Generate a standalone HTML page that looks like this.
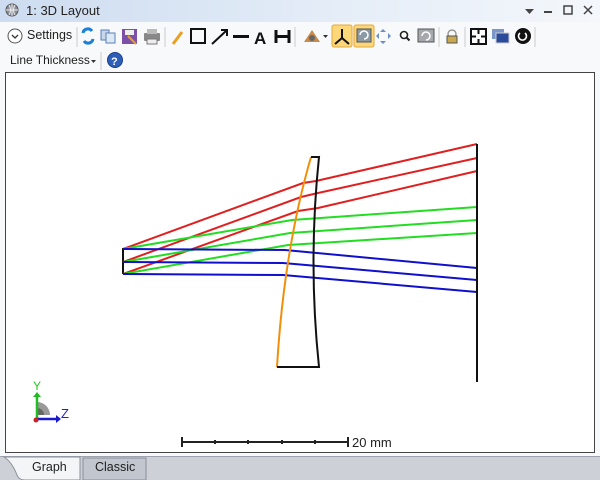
<!DOCTYPE html>
<html><head><style>
body{margin:0;width:600px;height:480px;overflow:hidden;background:#f8f9fa;font-family:"Liberation Sans",sans-serif;position:relative}
.t{position:absolute;font-size:12.5px;color:#1e1e1e;white-space:nowrap}
</style></head><body>
<div style="position:absolute;left:0;top:0;width:600px;height:22px;background:linear-gradient(90deg,#cddcf0,#e6eef8 60%,#f4f7fb)"></div>
<svg style="position:absolute;left:0;top:0" width="600" height="480">
<circle cx="12" cy="10" r="6" fill="#8a8f99" stroke="#555" stroke-width="1"/>
<path d="M12 4V16M6 10H18M9 5Q12 10 9 15M15 5Q12 10 15 15" stroke="#eee" stroke-width="1" fill="none"/>
<path d="M525 9h9l-4.5 5z" fill="#444"/>
<rect x="544" y="11" width="8" height="2" fill="#444"/>
<rect x="564" y="6" width="8" height="8" fill="none" stroke="#444" stroke-width="1.5"/>
<path d="M584 6l8 8M592 6l-8 8" stroke="#444" stroke-width="1.5"/>
<circle cx="15" cy="36" r="7" fill="#fff" stroke="#555"/>
<path d="M12 35l3 3 3-3" stroke="#333" stroke-width="1.3" fill="none"/>
<path d="M77 27v20M165 27v20M295 27v20M439 27v20M465 27v20M535 27v20M101 52v18" stroke="#ccc"/>
<path d="M83 33a5 5 0 0 1 9-2M93 39a5 5 0 0 1-9 2" stroke="#1a7fd6" stroke-width="3" fill="none"/>
<rect x="101" y="30" width="8" height="10" fill="#c8d6ec" stroke="#5a7fb5"/><rect x="106" y="33" width="9" height="10" fill="#dde8f6" stroke="#5a7fb5"/>
<rect x="122" y="29" width="15" height="15" fill="#7c4fa8"/><rect x="125" y="30" width="9" height="5" fill="#eee"/><path d="M128 36l8 8" stroke="#e8a020" stroke-width="2"/>
<rect x="144" y="33" width="16" height="8" fill="#888" rx="1"/><rect x="147" y="29" width="10" height="5" fill="#bbb"/><rect x="147" y="39" width="10" height="5" fill="#eee" stroke="#777"/>
<path d="M173 44l9-12" stroke="#e8a020" stroke-width="3"/>
<rect x="191" y="29" width="14" height="14" fill="none" stroke="#111" stroke-width="2"/>
<path d="M212 44l14-13M221 30h6v6" stroke="#111" stroke-width="2" fill="none"/>
<rect x="233" y="35" width="16" height="3" fill="#111"/>
<text x="254" y="44" font-size="17" font-weight="bold" font-family="Liberation Sans" fill="#111">A</text>
<path d="M276 30v13M289 30v13M276 36.5h13" stroke="#111" stroke-width="3"/>
<path d="M304 42l8-12 8 12z" fill="#c9894a"/><circle cx="312" cy="38" r="3" fill="#666"/><path d="M323 35h5l-2.5 3z" fill="#333"/>
<rect x="332" y="25" width="20" height="22" fill="#fbd77a" stroke="#e5a93a" rx="2"/>
<path d="M342 29v9M342 38l-7 6M342 38l7 6" stroke="#111" stroke-width="2"/>
<rect x="354" y="25" width="20" height="22" fill="#fbd77a" stroke="#e5a93a" rx="2"/>
<rect x="357" y="29" width="14" height="13" fill="#8c9aa4" stroke="#555"/><path d="M360 35a4 4 0 1 1 4 4" stroke="#fff" fill="none" stroke-width="1.5"/>
<path d="M383 29l-3 3h6zM383 44l-3-3h6zM376 36l3-3v6zM391 36l-3-3v6z" fill="#6b8fc2"/>
<circle cx="404" cy="35" r="3.5" fill="none" stroke="#222" stroke-width="1.6"/><path d="M406.5 37.5l3 3" stroke="#222" stroke-width="2"/>
<rect x="418" y="29" width="16" height="13" fill="#a5a9ad" stroke="#555"/><path d="M422 36a4 4 0 1 1 4 4" stroke="#fff" fill="none" stroke-width="1.5"/>
<circle cx="452" cy="34" r="4" fill="none" stroke="#999" stroke-width="1.5"/><rect x="447" y="36" width="10" height="7" fill="#c9a850" stroke="#555"/>
<rect x="471" y="29" width="15" height="15" fill="#fff" stroke="#111" stroke-width="2"/><path d="M478.5 29v5M478.5 39v5M471 36.5h5M481 36.5h5" stroke="#111" stroke-width="2"/>
<rect x="492" y="29" width="12" height="10" fill="#7b97c8"/><rect x="496" y="33" width="13" height="10" fill="#2a4a9a" stroke="#ccc"/>
<circle cx="523" cy="36" r="8" fill="#111"/><path d="M520 33a4 4 0 1 0 5 0" stroke="#fff" stroke-width="1.6" fill="none"/>
<path d="M91 60h5l-2.5 3z" fill="#333"/>
<circle cx="115" cy="60" r="7.5" fill="#2e5fb8" stroke="#1a3f88"/><text x="111" y="65" font-size="11" font-weight="bold" fill="#fff">?</text>
<rect x="5.5" y="72.5" width="589" height="380" fill="#fff" stroke="#444"/>
<g fill="none" stroke-width="2">
<path d="M123 248V274" stroke="#111"/>
<path d="M123 249L303 183L316 181L477 144M123 262L301 197L318 193L477 158M123 274L298 211L318 208L477 171" stroke="#e02020"/>
<path d="M123 249L292 220L477 207M123 262L290 233L477 220M123 274L288 245L477 233" stroke="#22dd22"/>
<path d="M123 249L285 250L477 268M123 262L283 263L477 280M123 274L283 275L477 292" stroke="#1010cc"/>
<path d="M311 157Q284 250 277 367" stroke="#f0900a"/>
<path d="M311 157H319Q308 262 319 367H277" stroke="#111"/>
<path d="M477 144V382" stroke="#111"/>
<path d="M182 442H348M182 437v10M348 437v10" stroke="#222" stroke-width="2"/>
</g>
<path d="M215 440v4M248 440v4M282 440v4M315 440v4" stroke="#222" stroke-width="2"/>
<text x="352" y="447" font-size="13" fill="#222">20 mm</text>
<path d="M37 402a13 13 0 0 1 13 13h-13z" fill="#999"/><path d="M37 408a7 7 0 0 1 7 7h-7z" fill="#666"/>
<path d="M37 418V395" stroke="#22bb22" stroke-width="2.5"/><path d="M33 397l4-5 4 5z" fill="#22bb22"/>
<path d="M36 419H58" stroke="#1a1acc" stroke-width="2.5"/><path d="M56 415l5 4-5 4z" fill="#1a1acc"/>
<circle cx="36" cy="420" r="2.5" fill="#cc2222"/>
<text x="33" y="390" font-size="12" fill="#22cc22">Y</text>
<text x="61" y="418" font-size="13" fill="#2222cc">Z</text>
<rect x="0" y="457" width="600" height="23" fill="#cdd0d6"/>
<path d="M0 456.5H600" stroke="#9ea3ad"/>
<path d="M4 457Q12 462 17 475Q19 480 25 480H80V457Z" fill="#f4f5f7" stroke="#8a8f99"/>
<path d="M83 458H146V480H83Z" fill="#c2c6ce" stroke="#8a8f99"/>
</svg>
<div class="t" style="left:27px;top:28px">Settings</div>
<div class="t" style="left:10px;top:53px;font-size:12px">Line Thickness</div>
<div class="t" style="left:26px;top:3px;font-size:13px;color:#222">1: 3D Layout</div>
<div class="t" style="left:32px;top:460px">Graph</div>
<div class="t" style="left:95px;top:460px">Classic</div>
</body></html>
